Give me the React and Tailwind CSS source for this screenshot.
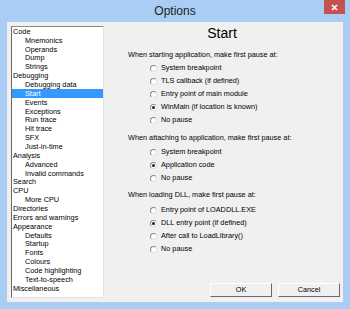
import React from "react";

const tree = [
  ["Code", 0], ["Mnemonics", 1], ["Operands", 1], ["Dump", 1], ["Strings", 1],
  ["Debugging", 0], ["Debugging data", 1], ["Start", 1, true], ["Events", 1],
  ["Exceptions", 1], ["Run trace", 1], ["Hit trace", 1], ["SFX", 1], ["Just-in-time", 1],
  ["Analysis", 0], ["Advanced", 1], ["Invalid commands", 1], ["Search", 0], ["CPU", 0],
  ["More CPU", 1], ["Directories", 0], ["Errors and warnings", 0], ["Appearance", 0],
  ["Defaults", 1], ["Startup", 1], ["Fonts", 1], ["Colours", 1], ["Code highlighting", 1],
  ["Text-to-speech", 1], ["Miscellaneous", 0],
];

function Radio({ label, checked }) {
  return (
    <div className="h-[13px] flex items-center pl-[46px]">
      <div className="w-[7px] h-[7px] rounded-full border border-t-[#8a8a8a] border-l-[#8a8a8a] border-r-[#e0e0e0] border-b-[#e0e0e0] bg-white flex items-center justify-center">
        {checked && <div className="w-[3px] h-[3px] rounded-full bg-[#222]" />}
      </div>
      <span className="ml-[4px]">{label}</span>
    </div>
  );
}

export default function App() {
  return (
    <div
      className="w-[350px] h-[309px] bg-[#aacdf3] flex flex-col text-black"
      style={{ fontFamily: '"Liberation Sans", Arial, sans-serif' }}
    >
      <div className="h-[22px] relative flex items-center justify-center">
        <span className="text-[12px] text-[#222]">Options</span>
        <div className="absolute top-0 right-[5px] w-[21px] h-[14px] bg-[#c75050] flex items-center justify-center">
          <svg width="7" height="7" viewBox="0 0 7 7">
            <path d="M1 1 L6 6 M6 1 L1 6" stroke="white" strokeWidth="1.6" />
          </svg>
        </div>
      </div>
      <div className="mx-[7px] h-[280px] bg-[#f0f0f0] flex text-[7px] leading-none">
        <div className="ml-[4px] mt-[4px] w-[93px] h-[272px] bg-white border border-t-[#8a8a8a] border-l-[#6a6a6a] border-r-[#e3e3e3] border-b-[#e3e3e3] flex flex-col">
          {tree.map(([t, lvl, sel]) => (
            <div
              key={t}
              className={
                "h-[8.86px] shrink-0 flex items-center text-[7.3px] " +
                (sel ? "bg-[#3399ff] text-white " : "") +
                (lvl ? "pl-[13px]" : "pl-[1px]")
              }
            >
              {t}
            </div>
          ))}
        </div>
        <div className="flex-1 flex flex-col text-[7.3px]">
          <div className="mt-[4px] h-[14px] flex items-center justify-center text-[14px] pr-[3px]">Start</div>
          <div className="mt-[8.5px] h-[13px] flex items-center pl-[24px]">When starting application, make first pause at:</div>
          <Radio label="System breakpoint" />
          <Radio label="TLS callback (if defined)" />
          <Radio label="Entry point of main module" />
          <Radio label="WinMain (if location is known)" checked />
          <Radio label="No pause" />
          <div className="mt-[5px] h-[13px] flex items-center pl-[24px]">When attaching to application, make first pause at:</div>
          <div className="mt-[1px]">
            <Radio label="System breakpoint" />
            <Radio label="Application code" checked />
            <Radio label="No pause" />
          </div>
          <div className="mt-[4px] h-[13px] flex items-center pl-[24px]">When loading DLL, make first pause at:</div>
          <div className="mt-[2px]">
            <Radio label="Entry point of LOADDLL.EXE" />
            <Radio label="DLL entry point (if defined)" checked />
            <Radio label="After call to LoadLibrary()" />
            <Radio label="No pause" />
          </div>
          <div className="flex-1" />
          <div className="flex justify-end gap-[6px] pr-[3px] mb-[5px]">
            <div className="w-[62px] h-[14px] bg-[#f0f0f0] border border-t-white border-l-white border-r-[#6a6a6a] border-b-[#6a6a6a] flex items-center justify-center">OK</div>
            <div className="w-[62px] h-[14px] bg-[#f0f0f0] border border-t-white border-l-white border-r-[#6a6a6a] border-b-[#6a6a6a] flex items-center justify-center">Cancel</div>
          </div>
        </div>
      </div>
    </div>
  );
}
